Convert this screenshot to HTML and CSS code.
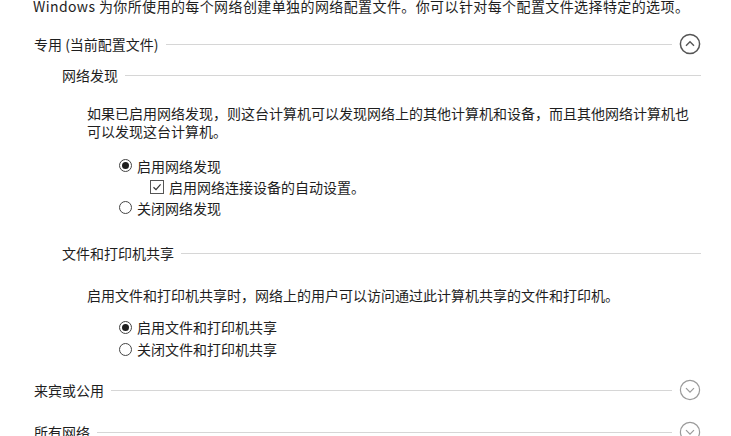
FILE: index.html
```html
<!DOCTYPE html>
<html lang="zh-CN">
<head>
<meta charset="utf-8">
<link rel="stylesheet" href="styles.css">
</head>
<body>
<div class="page">
  <p class="intro">Windows 为你所使用的每个网络创建单独的网络配置文件。你可以针对每个配置文件选择特定的选项。</p>

  <div class="head head-1">
    <span class="title">专用 (当前配置文件)</span>
    <span class="rule"></span>
    <svg class="toggle" width="22" height="22" viewBox="0 0 22 22"><circle cx="11" cy="11" r="9.6" fill="none" stroke="#555" stroke-width="1.5"/><path d="M7 12.8 L11 8.8 L15 12.8" fill="none" stroke="#555" stroke-width="1.4"/></svg>
  </div>

  <div class="sub sub-1">
    <span class="title">网络发现</span>
    <span class="rule"></span>
  </div>
  <p class="para para-1">如果已启用网络发现，则这台计算机可以发现网络上的其他计算机和设备，而且其他网络计算机也<br>可以发现这台计算机。</p>
  <div class="options opt-1">
    <div class="opt"><span class="radio on"></span>启用网络发现</div>
    <div class="opt check-row"><span class="check"><svg width="12" height="12" viewBox="0 0 12 12"><path d="M2.5 6.2 L5 8.6 L9.6 3.4" fill="none" stroke="#333" stroke-width="1.2"/></svg></span>启用网络连接设备的自动设置。</div>
    <div class="opt"><span class="radio"></span>关闭网络发现</div>
  </div>

  <div class="sub sub-2">
    <span class="title">文件和打印机共享</span>
    <span class="rule"></span>
  </div>
  <p class="para para-2">启用文件和打印机共享时，网络上的用户可以访问通过此计算机共享的文件和打印机。</p>
  <div class="options opt-2">
    <div class="opt tall"><span class="radio on"></span>启用文件和打印机共享</div>
    <div class="opt tall"><span class="radio"></span>关闭文件和打印机共享</div>
  </div>

  <div class="head head-2">
    <span class="title">来宾或公用</span>
    <span class="rule"></span>
    <svg class="toggle" width="22" height="22" viewBox="0 0 22 22"><circle cx="11" cy="11" r="9.6" fill="none" stroke="#9a9a9a" stroke-width="1.2"/><path d="M7 9.2 L11 13.2 L15 9.2" fill="none" stroke="#9a9a9a" stroke-width="1.2"/></svg>
  </div>
  <div class="head head-3">
    <span class="title">所有网络</span>
    <span class="rule"></span>
    <svg class="toggle" width="22" height="22" viewBox="0 0 22 22"><circle cx="11" cy="11" r="9.6" fill="none" stroke="#9a9a9a" stroke-width="1.2"/><path d="M7 9.2 L11 13.2 L15 9.2" fill="none" stroke="#9a9a9a" stroke-width="1.2"/></svg>
  </div>
</div>
</body>
</html>
```

FILE: styles.css
```css
html, body {
  margin: 0;
  padding: 0;
  background: #ffffff;
  overflow: hidden;
}
body {
  width: 731px;
  height: 436px;
  font-family: "Noto Sans CJK SC", "Noto Sans", sans-serif;
  font-size: 14px;
  color: #1e1e1e;
}
.page {
  padding: 0 30px 0 34px;
}
.intro {
  margin: -4px 0 0 -1px;
  line-height: 20px;
  white-space: nowrap;
  letter-spacing: 0.4px;
}
.head, .sub {
  display: flex;
  align-items: center;
}
.head {
  height: 24px;
  margin-top: 16px;
}
.head-2, .head-3 { margin-top: 18px; }
.sub {
  height: 20px;
  margin-left: 28px;
}
.sub-1 { margin-top: 9px; }
.sub-2 { margin-top: 25px; }
.title {
  white-space: nowrap;
  line-height: 20px;
}
.rule {
  flex: 1;
  height: 1px;
  background: #d6d6d6;
  margin-left: 7px;
}
.head .rule { margin-right: 7px; }
.toggle {
  flex: none;
  display: block;
}
.para {
  margin: 0 0 0 53px;
  line-height: 18px;
  letter-spacing: 0;
  white-space: nowrap;
}
.para-1 { margin-top: 19px; }
.para-2 { margin-top: 23px; }
.options {
  margin-left: 85px;
}
.opt-1 { margin-top: 15px; }
.opt-2 { margin-top: 12px; }
.opt {
  display: flex;
  align-items: center;
  height: 21px;
  white-space: nowrap;
}
.opt.tall { height: 22px; }
.check-row { padding-left: 31px; }
.radio {
  width: 11px;
  height: 11px;
  border: 1.3px solid #444;
  border-radius: 50%;
  margin-right: 5px;
  position: relative;
  flex: none;
}
.radio.on::after {
  content: "";
  position: absolute;
  left: 2px;
  top: 2px;
  width: 7px;
  height: 7px;
  border-radius: 50%;
  background: #1e1e1e;
}
.check {
  width: 12px;
  height: 12px;
  border: 1px solid #555;
  margin-right: 5px;
  display: flex;
  align-items: center;
  justify-content: center;
  flex: none;
}
.check svg { display: block; }
```
